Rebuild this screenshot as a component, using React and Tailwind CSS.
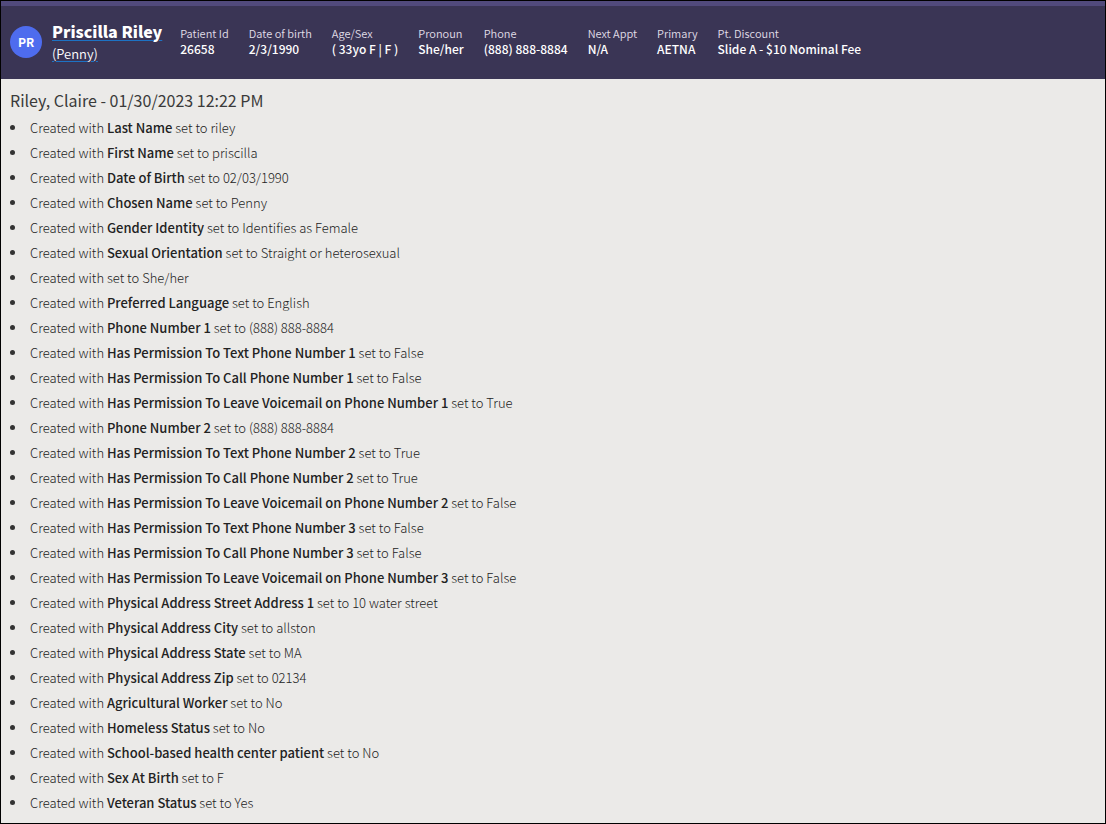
const details = [
  { label: 'Patient Id', value: '26658' },
  { label: 'Date of birth', value: '2/3/1990' },
  { label: 'Age/Sex', value: '( 33yo F | F )' },
  { label: 'Pronoun', value: 'She/her' },
  { label: 'Phone', value: '(888) 888-8884' },
  { label: 'Next Appt', value: 'N/A' },
  { label: 'Primary', value: 'AETNA' },
  { label: 'Pt. Discount', value: 'Slide A - $10 Nominal Fee' },
];

const changes = [
  ['Last Name', 'riley'],
  ['First Name', 'priscilla'],
  ['Date of Birth', '02/03/1990'],
  ['Chosen Name', 'Penny'],
  ['Gender Identity', 'Identifies as Female'],
  ['Sexual Orientation', 'Straight or heterosexual'],
  ['', 'She/her'],
  ['Preferred Language', 'English'],
  ['Phone Number 1', '(888) 888-8884'],
  ['Has Permission To Text Phone Number 1', 'False'],
  ['Has Permission To Call Phone Number 1', 'False'],
  ['Has Permission To Leave Voicemail on Phone Number 1', 'True'],
  ['Phone Number 2', '(888) 888-8884'],
  ['Has Permission To Text Phone Number 2', 'True'],
  ['Has Permission To Call Phone Number 2', 'True'],
  ['Has Permission To Leave Voicemail on Phone Number 2', 'False'],
  ['Has Permission To Text Phone Number 3', 'False'],
  ['Has Permission To Call Phone Number 3', 'False'],
  ['Has Permission To Leave Voicemail on Phone Number 3', 'False'],
  ['Physical Address Street Address 1', '10 water street'],
  ['Physical Address City', 'allston'],
  ['Physical Address State', 'MA'],
  ['Physical Address Zip', '02134'],
  ['Agricultural Worker', 'No'],
  ['Homeless Status', 'No'],
  ['School-based health center patient', 'No'],
  ['Sex At Birth', 'F'],
  ['Veteran Status', 'Yes'],
];

function PatientHeader() {
  return (
    <header className="flex items-center border-t-[5px] border-[#514a7c] bg-[#3a3555] px-[9px] pt-[13px] pb-[14px] text-white">
      <div className="flex size-8 shrink-0 items-center justify-center rounded-full bg-[#4e6cee] text-[12px] leading-none font-bold">
        PR
      </div>
      <a
        href="#patient"
        className="ml-[10px] flex shrink-0 flex-col text-white underline decoration-[#1d72c4] decoration-1 underline-offset-2"
      >
        <span className="text-[16px] leading-6 font-black">Priscilla Riley</span>
        <span className="text-[13px] leading-[22px] font-[350]">(Penny)</span>
      </a>
      <dl className="ml-[18px] flex flex-wrap gap-x-5 pb-[2px]">
        {details.map(({ label, value }) => (
          <div key={label}>
            <dt className="text-[11px] leading-4 font-[350] text-[#e0dee8]">{label}</dt>
            <dd className="text-[12px] leading-4 font-medium">{value}</dd>
          </div>
        ))}
      </dl>
    </header>
  );
}

export default function App() {
  return (
    <div className="min-h-screen border border-black bg-[#ebeae8] font-['Noto_Sans_CJK_SC','Noto_Sans',sans-serif] text-[#222222]">
      <PatientHeader />
      <main className="px-[9px] pt-[9px] pb-[7px]">
        <h1 className="text-[16px] leading-6 font-normal text-[#3a3a3a]">Riley, Claire - 01/30/2023 12:22 PM</h1>
        <ul className="mt-[3px]">
          {changes.map(([field, value], index) => (
            <li key={index} className="flex items-center text-[13px] leading-[25px] font-light">
              <span aria-hidden="true" className="mr-[15px] size-[5px] shrink-0 rounded-full bg-[#333333]" />
              <span>
                Created with {field && <b className="font-medium">{field}</b>} set to {value}
              </span>
            </li>
          ))}
        </ul>
      </main>
    </div>
  );
}
